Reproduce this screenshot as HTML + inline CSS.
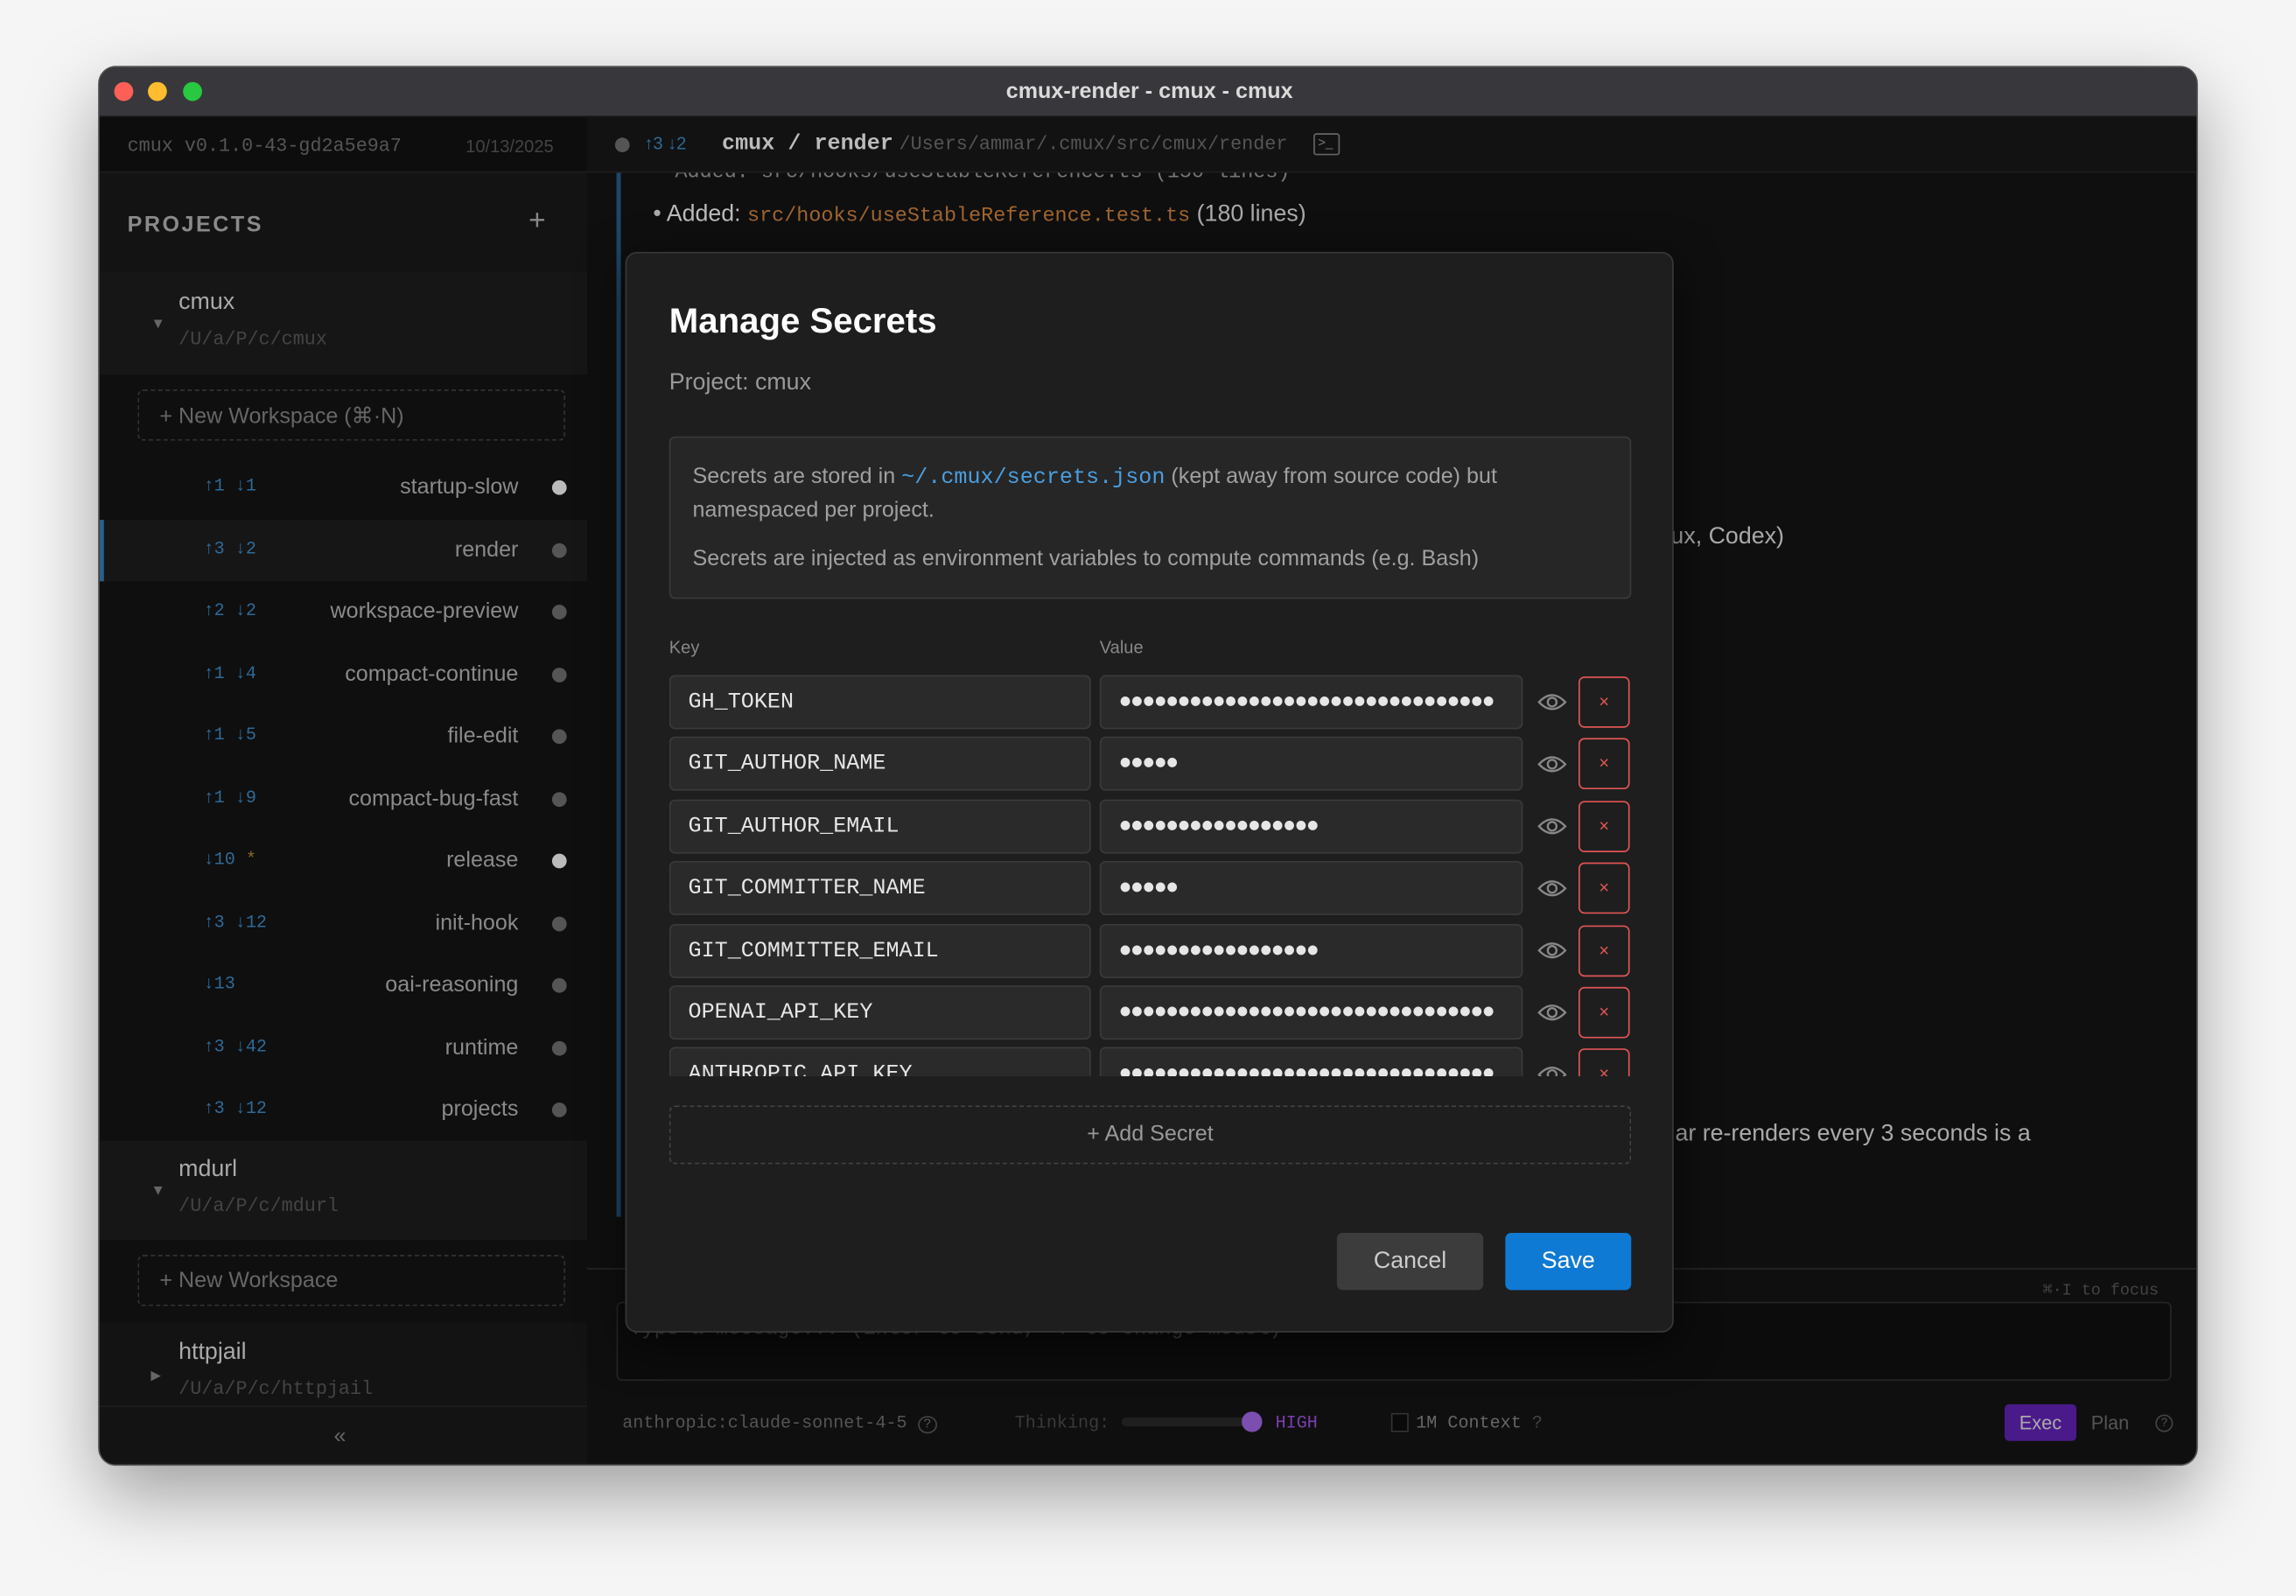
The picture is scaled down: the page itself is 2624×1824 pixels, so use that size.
<!DOCTYPE html>
<html><head><meta charset="utf-8">
<style>
*{box-sizing:border-box;margin:0;padding:0}
html,body{width:2624px;height:1824px;overflow:hidden;background:#f4f4f4}
#s{position:absolute;left:0;top:0;width:1568px;height:1090px;transform:scale(1.67347);transform-origin:0 0;font-family:"Liberation Sans",sans-serif;background:#f5f5f5}
.a{position:absolute;white-space:nowrap}
.m{font-family:"Liberation Mono",monospace}
#win{position:absolute;left:67px;top:45px;width:1434px;height:956px;border-radius:12px;overflow:hidden;background:#0f0f0f;box-shadow:0 20px 50px rgba(0,0,0,.35);border:1px solid #555}
.row{position:absolute;left:0;width:333px;height:43px;background:#0f0f0f}
.row .c{position:absolute;left:71px;top:13px;font-size:12px;color:#2f6a98;font-family:"Liberation Mono",monospace}
.row .n{position:absolute;right:47px;top:12px;font-size:15px;color:#8a8a8a}
.row .d{position:absolute;left:309px;top:16px;width:10px;height:10px;border-radius:50%;background:#555}
.inp{position:absolute;height:37px;background:#2a2a2a;border:1px solid #3a3a3a;border-radius:4px;color:#e6e6e6;font-family:"Liberation Mono",monospace;font-size:15px;padding:9px 12px;overflow:hidden;white-space:nowrap}
.val{letter-spacing:-1px;font-size:15px}
.del{position:absolute;width:35px;height:35px;border:1.5px solid #e05555;border-radius:4px;color:#e05555;font-size:12px;text-align:center;line-height:32px}
</style></head><body><div id="s">
<div id="win">
 <div class="a" style="left:0;top:0;width:1434px;height:34px;background:#38383c;border-bottom:1px solid #1a1a1a"></div>
 <div class="a" style="left:10px;top:10px;width:13px;height:13px;border-radius:50%;background:#fe5f57"></div>
 <div class="a" style="left:33px;top:10px;width:13px;height:13px;border-radius:50%;background:#febc2e"></div>
 <div class="a" style="left:57px;top:10px;width:13px;height:13px;border-radius:50%;background:#28c840"></div>
 <div class="a" style="left:0;width:1434px;top:8px;text-align:center;font-size:15px;font-weight:bold;color:#dadada">cmux-render - cmux - cmux</div>

 <div class="a" style="left:0;top:34px;width:333px;height:922px;background:#131313"></div>
 <div class="a" style="left:0;top:34px;width:333px;height:38px;background:#0d0d0d;border-bottom:1px solid #1e1e1e"></div>
 <div class="a m" style="left:19px;top:46px;font-size:13px;color:#555">cmux v0.1.0-43-gd2a5e9a7</div>
 <div class="a" style="left:250px;top:47px;font-size:12px;color:#444">10/13/2025</div>
 <div class="a" style="left:19px;top:99px;font-size:15px;font-weight:bold;color:#8a8a8a;letter-spacing:1.5px">PROJECTS</div>
 <div class="a" style="left:293px;top:94px;font-size:20px;color:#888">+</div>

 <div class="a" style="left:0;top:140px;width:333px;height:70px;background:#161616"></div>
 <div class="a" style="left:35px;top:170px;font-size:10px;color:#666">▼</div>
 <div class="a" style="left:54px;top:152px;font-size:16px;color:#aaa">cmux</div>
 <div class="a m" style="left:54px;top:178px;font-size:13px;color:#444">/U/a/P/c/cmux</div>
 <div class="a" style="left:0;top:210px;width:333px;height:57px;background:#0f0f0f"></div>
 <div class="a" style="left:26px;top:220px;width:292px;height:35px;border:1px dashed #333;border-radius:4px"></div>
 <div class="a" style="left:41px;top:229px;font-size:15px;color:#666">+ New Workspace (⌘·N)</div>

 <div style="position:absolute;left:0;top:266px">
  <div class="row" style="top:0"><span class="c">↑1 ↓1</span><span class="n">startup-slow</span><span class="d" style="background:#bbb"></span></div>
  <div class="row" style="top:42.5px;background:#161616;box-shadow:inset 3px 0 0 #2b5f8a"><span class="c">↑3 ↓2</span><span class="n">render</span><span class="d"></span></div>
  <div class="row" style="top:85px"><span class="c">↑2 ↓2</span><span class="n">workspace-preview</span><span class="d"></span></div>
  <div class="row" style="top:127.5px"><span class="c">↑1 ↓4</span><span class="n">compact-continue</span><span class="d"></span></div>
  <div class="row" style="top:170px"><span class="c">↑1 ↓5</span><span class="n">file-edit</span><span class="d"></span></div>
  <div class="row" style="top:212.5px"><span class="c">↑1 ↓9</span><span class="n">compact-bug-fast</span><span class="d"></span></div>
  <div class="row" style="top:255px"><span class="c">↓10 <span style="color:#8a6a2a">*</span></span><span class="n">release</span><span class="d" style="background:#bbb"></span></div>
  <div class="row" style="top:297.5px"><span class="c">↑3 ↓12</span><span class="n">init-hook</span><span class="d"></span></div>
  <div class="row" style="top:340px"><span class="c">↓13</span><span class="n">oai-reasoning</span><span class="d"></span></div>
  <div class="row" style="top:382.5px"><span class="c">↑3 ↓42</span><span class="n">runtime</span><span class="d"></span></div>
  <div class="row" style="top:425px"><span class="c">↑3 ↓12</span><span class="n">projects</span><span class="d"></span></div>
 </div>

 <div class="a" style="left:0;top:733px;width:333px;height:68px;background:#161616"></div>
 <div class="a" style="left:35px;top:762px;font-size:10px;color:#666">▼</div>
 <div class="a" style="left:54px;top:744px;font-size:16px;color:#aaa">mdurl</div>
 <div class="a m" style="left:54px;top:770px;font-size:13px;color:#444">/U/a/P/c/mdurl</div>
 <div class="a" style="left:0;top:801px;width:333px;height:56px;background:#0f0f0f"></div>
 <div class="a" style="left:26px;top:811px;width:292px;height:35px;border:1px dashed #333;border-radius:4px"></div>
 <div class="a" style="left:41px;top:820px;font-size:15px;color:#666">+ New Workspace</div>
 <div class="a" style="left:35px;top:888px;font-size:9px;color:#666">▶</div>
 <div class="a" style="left:54px;top:869px;font-size:16px;color:#aaa">httpjail</div>
 <div class="a m" style="left:54px;top:895px;font-size:13px;color:#444">/U/a/P/c/httpjail</div>
 <div class="a" style="left:0;top:914px;width:333px;height:1px;background:#1e1e1e"></div>
 <div class="a" style="left:160px;top:926px;font-size:15px;color:#666">«</div>

 <div class="a" style="left:333px;top:34px;width:1101px;height:38px;background:#121212;border-bottom:1px solid #1e1e1e"></div>
 <div class="a" style="left:352px;top:48px;width:10px;height:10px;border-radius:50%;background:#555"></div>
 <div class="a" style="left:372px;top:45px;font-size:12px;color:#2f6a98">↑3 ↓2</div>
 <div class="a m" style="left:425px;top:44px;font-size:15px;color:#bbb;font-weight:bold">cmux / render</div>
 <div class="a m" style="left:546px;top:45px;font-size:13px;color:#555">/Users/ammar/.cmux/src/cmux/render</div>
 <div class="a" style="left:829px;top:45px;width:18px;height:15px;border:1.5px solid #666;border-radius:2px;font-size:9px;color:#777;line-height:11px;padding-left:2px">&gt;_</div>

 <div class="a" style="left:333px;top:72px;width:1101px;height:10px;overflow:hidden"><div class="a m" style="left:60px;top:-8px;font-size:14px;color:#777">Added: src/hooks/useStableReference.ts (150 lines)</div></div>
 <div class="a" style="left:353px;top:72px;width:3px;height:713px;background:#1f4668"></div>
 <div class="a" style="left:378px;top:92px;font-size:16px;color:#aaa">• <span style="color:#bbb">Added:</span> <span class="m" style="color:#a0652f;font-size:14px">src/hooks/useStableReference.test.ts</span> (180 lines)</div>
 <div class="a" style="left:1073px;top:312px;font-size:16px;color:#aaa">ux, Codex)</div>
 <div class="a" style="left:1076px;top:720px;font-size:16px;color:#aaa">ar re-renders every 3 seconds is a</div>

 <div class="a" style="left:333px;top:820px;width:1101px;height:1px;background:#262626"></div>
 <div class="a m" style="left:1327px;top:828px;font-size:11px;color:#444">⌘·I to focus</div>
 <div class="a" style="left:353px;top:843px;width:1062px;height:54px;border:1px solid #262626;border-radius:4px;background:#0c0c0c"></div>
 <div class="a m" style="left:362px;top:853px;font-size:14px;color:#444">Type a message... (Enter to send, ⌘/ to change model)</div>
 <div class="a m" style="left:357px;top:919px;font-size:12px;color:#555">anthropic:claude-sonnet-4-5 <span style="border:1px solid #444;border-radius:50%;font-size:9px;padding:0 3px">?</span></div>
 <div class="a m" style="left:625px;top:919px;font-size:12px;color:#3a3a3a">Thinking:</div>
 <div class="a" style="left:698px;top:922px;width:90px;height:6px;border-radius:3px;background:#1f1f1f"></div>
 <div class="a" style="left:780px;top:918px;width:14px;height:14px;border-radius:50%;background:#7a4fb0"></div>
 <div class="a m" style="left:803px;top:919px;font-size:12px;color:#7a3fb0">HIGH</div>
 <div class="a" style="left:882px;top:919px;width:12px;height:13px;border:1px solid #333;background:#0a0a0a"></div>
 <div class="a m" style="left:899px;top:919px;font-size:12px;color:#666">1M Context <span style="color:#444">?</span></div>
 <div class="a" style="left:1301px;top:913px;width:49px;height:25px;background:#4a1a8a;border-radius:3px;color:#aaa;font-size:13px;text-align:center;line-height:25px">Exec</div>
 <div class="a" style="left:1360px;top:918px;font-size:13px;color:#555">Plan</div>
 <div class="a" style="left:1404px;top:920px;width:12px;height:12px;border:1px solid #444;border-radius:50%;font-size:8px;color:#555;text-align:center;line-height:10px">?</div>

 <div class="a" style="left:359px;top:126px;width:716px;height:738px;background:#1e1e1e;border:1px solid #383838;border-radius:8px;box-shadow:0 8px 30px rgba(0,0,0,.6)">
  <div class="a" style="left:29px;top:33px;font-size:24px;font-weight:bold;color:#fff">Manage Secrets</div>
  <div class="a" style="left:29px;top:80px;font-size:16px;color:#999">Project: cmux</div>
  <div class="a" style="left:29px;top:125px;width:657px;height:111px;background:#262626;border:1px solid #3a3a3a;border-radius:4px"></div>
  <div class="a" style="left:45px;top:144px;font-size:15px;color:#a0a0a0">Secrets are stored in <span class="m" style="color:#4a9ee0">~/.cmux/secrets.json</span> (kept away from source code) but</div>
  <div class="a" style="left:45px;top:167px;font-size:15px;color:#a0a0a0">namespaced per project.</div>
  <div class="a" style="left:45px;top:200px;font-size:15px;color:#a0a0a0">Secrets are injected as environment variables to compute commands (e.g. Bash)</div>
  <div class="a" style="left:29px;top:262px;font-size:12px;color:#888">Key</div>
  <div class="a" style="left:323px;top:262px;font-size:12px;color:#888">Value</div>

  <div class="a" style="left:29px;top:288px;width:660px;height:274px;overflow:hidden">
   <div class="inp" style="left:0;top:0;width:288px">GH_TOKEN</div><div class="inp val" style="left:294px;top:0;width:289px">●●●●●●●●●●●●●●●●●●●●●●●●●●●●●●●●</div>
   <div class="inp" style="left:0;top:42.4px;width:288px">GIT_AUTHOR_NAME</div><div class="inp val" style="left:294px;top:42.4px;width:289px">●●●●●</div>
   <div class="inp" style="left:0;top:84.8px;width:288px">GIT_AUTHOR_EMAIL</div><div class="inp val" style="left:294px;top:84.8px;width:289px">●●●●●●●●●●●●●●●●●</div>
   <div class="inp" style="left:0;top:127.2px;width:288px">GIT_COMMITTER_NAME</div><div class="inp val" style="left:294px;top:127.2px;width:289px">●●●●●</div>
   <div class="inp" style="left:0;top:169.6px;width:288px">GIT_COMMITTER_EMAIL</div><div class="inp val" style="left:294px;top:169.6px;width:289px">●●●●●●●●●●●●●●●●●</div>
   <div class="inp" style="left:0;top:212px;width:288px">OPENAI_API_KEY</div><div class="inp val" style="left:294px;top:212px;width:289px">●●●●●●●●●●●●●●●●●●●●●●●●●●●●●●●●</div>
   <div class="inp" style="left:0;top:254.4px;width:288px">ANTHROPIC_API_KEY</div><div class="inp val" style="left:294px;top:254.4px;width:289px">●●●●●●●●●●●●●●●●●●●●●●●●●●●●●●●●</div>
   <svg class="a" style="left:592px;top:0" width="22" height="300" viewBox="0 0 22 300" fill="none" stroke="#888" stroke-width="1.4">
    <g id="e"><path d="M2 18.5 Q11 9 20 18.5 Q11 28 2 18.5Z"/><circle cx="11" cy="18.5" r="3"/></g>
    <use href="#e" y="42.4"/><use href="#e" y="84.8"/><use href="#e" y="127.2"/><use href="#e" y="169.6"/><use href="#e" y="212"/><use href="#e" y="254.4"/>
   </svg>
   <div class="del" style="left:621px;top:1px">×</div>
   <div class="del" style="left:621px;top:43.4px">×</div>
   <div class="del" style="left:621px;top:85.8px">×</div>
   <div class="del" style="left:621px;top:128.2px">×</div>
   <div class="del" style="left:621px;top:170.6px">×</div>
   <div class="del" style="left:621px;top:213px">×</div>
   <div class="del" style="left:621px;top:255.4px">×</div>
  </div>

  <div class="a" style="left:29px;top:582px;width:657px;height:40px;border:1px dashed #444;border-radius:4px;text-align:center;line-height:38px;font-size:15px;color:#999">+ Add Secret</div>
  <div class="a" style="left:485px;top:669px;width:100px;height:39px;background:#3c3c3c;border-radius:4px;text-align:center;line-height:39px;font-size:16px;color:#ccc">Cancel</div>
  <div class="a" style="left:600px;top:669px;width:86px;height:39px;background:#0e7ad4;border-radius:4px;text-align:center;line-height:39px;font-size:16px;color:#fff">Save</div>
 </div>
</div>
</div></body></html>
